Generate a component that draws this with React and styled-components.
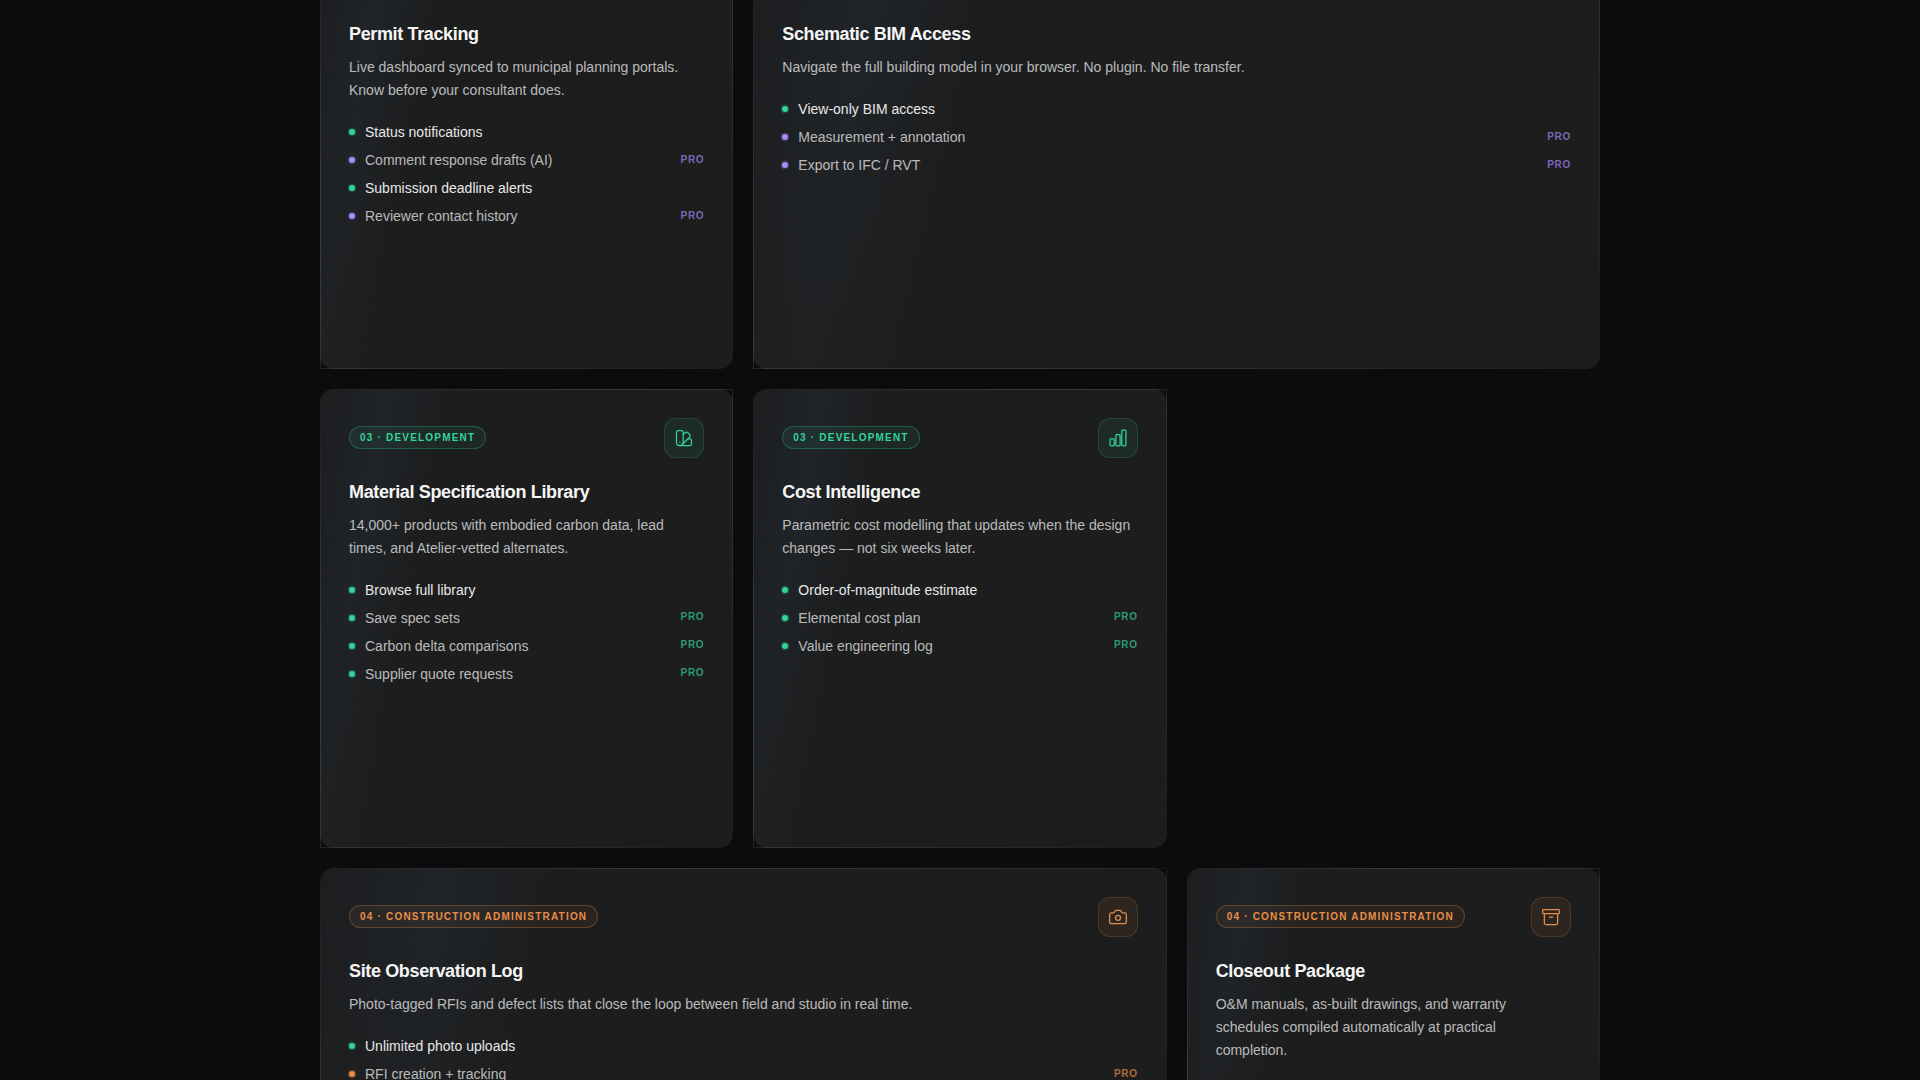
import styled, { createGlobalStyle } from "styled-components";
import { Camera, Archive, SwatchBook } from "lucide-react";

const GlobalStyle = createGlobalStyle`
  html, body {
    margin: 0;
    height: 100%;
    overflow: hidden;
    background: #0c0c0c;
  }
  body {
    font-family: "Liberation Sans", Arial, sans-serif;
    color: #fff;
  }
`;

const colors = {
  green: "52, 211, 153",
  purple: "167, 139, 250",
  orange: "232, 142, 72",
};

const Page = styled.main`
  width: 1280px;
  margin: -69px auto 0;
`;
const Grid = styled.div`
  display: grid;
  grid-template-columns: repeat(3, 1fr);
  grid-template-rows: 437.8px 459.2px auto;
  gap: 20px;
`;
const CardBox = styled.article`
  position: relative;
  grid-column: span ${props => props.$span || 1};
  padding: 29px;
  border-radius: 14px;
  background:
    linear-gradient(180deg, rgba(29, 29, 29, 0) 30%, rgba(29, 29, 29, 0.55) 100%),
    linear-gradient(100deg, #1c1d1f 0%, #202428 14%, #1c1d1e 26%, #1d1d1d 100%);
  &::after {
    content: "";
    position: absolute;
    inset: 0;
    border: 1px solid;
    border-image: linear-gradient(135deg, transparent 0%, rgba(255, 255, 255, 0.12) 30%, rgba(255, 255, 255, 0.08) 70%, transparent 100%) 1;
    pointer-events: none;
  }
`;
const CardHead = styled.div`
  display: flex;
  align-items: center;
  justify-content: space-between;
  min-height: 40px;
  margin-bottom: 22px;
`;
const Tag = styled.span`
  padding: 5px 10px;
  border-radius: 999px;
  font-size: 10px;
  line-height: 11px;
  font-weight: 700;
  letter-spacing: 0.12em;
  color: rgb(${props => colors[props.$tone]});
  background: rgba(${props => colors[props.$tone]}, 0.07);
  border: 1px solid rgba(${props => colors[props.$tone]}, 0.28);
`;
const IconBox = styled.div`
  display: flex;
  align-items: center;
  justify-content: center;
  width: 40px;
  height: 40px;
  box-sizing: border-box;
  border-radius: 12px;
  color: rgb(${props => colors[props.$tone]});
  background: rgba(${props => colors[props.$tone]}, 0.08);
  border: 1px solid rgba(${props => colors[props.$tone]}, 0.18);
`;
const Title = styled.h3`
  margin: 0 0 10px;
  font-size: 18px;
  line-height: 24px;
  font-weight: 700;
  letter-spacing: -0.02em;
  color: #f5f5f5;
`;
const Desc = styled.p`
  margin: 0 0 20px;
  font-size: 14px;
  line-height: 23.1px;
  color: rgba(255, 255, 255, 0.7);
`;
const List = styled.ul`
  display: flex;
  flex-direction: column;
  gap: 8px;
  margin: 0;
  padding: 0;
  list-style: none;
`;
const Row = styled.li`
  display: flex;
  align-items: center;
  gap: 10px;
  font-size: 14px;
  line-height: 20px;
  color: ${props => (props.$pro ? "rgba(255, 255, 255, 0.7)" : "#e8e8e8")};
`;
const Dot = styled.span`
  flex: none;
  width: 6px;
  height: 6px;
  border-radius: 50%;
  background: rgb(${props => colors[props.$tone]});
  box-shadow: 0 0 0 1.5px rgba(${props => colors[props.$tone]}, 0.2);
`;
const Pro = styled.span`
  margin: 0 0 1px auto;
  font-size: 10px;
  line-height: 10px;
  font-weight: 700;
  letter-spacing: 0.07em;
  color: rgba(${props => colors[props.$tone]}, 0.7);
`;

function BarsIcon() {
  return (
    <svg width="20" height="20" viewBox="0 0 24 24" fill="none" stroke="currentColor" strokeWidth="1.5" strokeLinejoin="round">
      <rect x="2.5" y="13" width="5" height="8.5" rx="1" />
      <rect x="9.5" y="8" width="5" height="13.5" rx="1" />
      <rect x="16.5" y="2.5" width="5" height="19" rx="1" />
    </svg>
  );
}

const cards = [
  {
    title: "Permit Tracking",
    desc: "Live dashboard synced to municipal planning portals. Know before your consultant does.",
    tone: "purple",
    items: [
      ["Status notifications"],
      ["Comment response drafts (AI)", true],
      ["Submission deadline alerts"],
      ["Reviewer contact history", true],
    ],
  },
  {
    title: "Schematic BIM Access",
    desc: "Navigate the full building model in your browser. No plugin. No file transfer.",
    tone: "purple",
    span: 2,
    items: [
      ["View-only BIM access"],
      ["Measurement + annotation", true],
      ["Export to IFC / RVT", true],
    ],
  },
  {
    title: "Material Specification Library",
    desc: "14,000+ products with embodied carbon data, lead times, and Atelier-vetted alternates.",
    tone: "green",
    tag: "03 · DEVELOPMENT",
    icon: <SwatchBook size={20} strokeWidth={1.5} />,
    items: [
      ["Browse full library"],
      ["Save spec sets", true],
      ["Carbon delta comparisons", true],
      ["Supplier quote requests", true],
    ],
  },
  {
    title: "Cost Intelligence",
    desc: "Parametric cost modelling that updates when the design changes — not six weeks later.",
    tone: "green",
    tag: "03 · DEVELOPMENT",
    icon: <BarsIcon />,
    items: [
      ["Order-of-magnitude estimate"],
      ["Elemental cost plan", true],
      ["Value engineering log", true],
    ],
  },
  {
    title: "Site Observation Log",
    desc: "Photo-tagged RFIs and defect lists that close the loop between field and studio in real time.",
    tone: "orange",
    tag: "04 · CONSTRUCTION ADMINISTRATION",
    icon: <Camera size={20} strokeWidth={1.5} />,
    span: 2,
    items: [
      ["Unlimited photo uploads"],
      ["RFI creation + tracking", true],
    ],
  },
  {
    title: "Closeout Package",
    desc: "O&M manuals, as-built drawings, and warranty schedules compiled automatically at practical completion.",
    tone: "orange",
    tag: "04 · CONSTRUCTION ADMINISTRATION",
    icon: <Archive size={20} strokeWidth={1.5} />,
    items: [],
  },
];

function Card({ card }) {
  return (
    <CardBox $span={card.span}>
      <CardHead>
        {card.tag && <Tag $tone={card.tone}>{card.tag}</Tag>}
        {card.icon && <IconBox $tone={card.tone}>{card.icon}</IconBox>}
      </CardHead>
      <Title>{card.title}</Title>
      <Desc>{card.desc}</Desc>
      <List>
        {card.items.map(([label, pro]) => (
          <Row key={label} $pro={pro}>
            <Dot $tone={pro ? card.tone : "green"} />
            {label}
            {pro && <Pro $tone={card.tone}>PRO</Pro>}
          </Row>
        ))}
      </List>
    </CardBox>
  );
}

export default function App() {
  return (
    <Page>
      <GlobalStyle />
      <Grid>
        {cards.map(card => (
          <Card key={card.title} card={card} />
        ))}
      </Grid>
    </Page>
  );
}
